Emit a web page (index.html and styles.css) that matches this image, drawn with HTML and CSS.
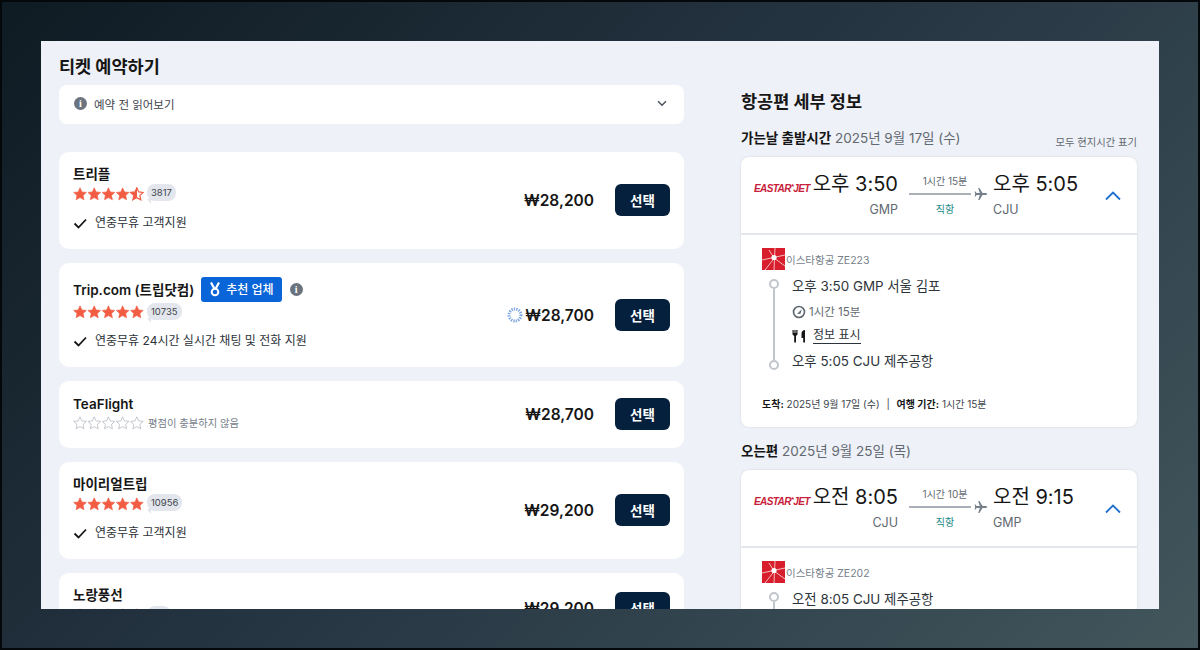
FILE: index.html
```html
<!DOCTYPE html>
<html lang="ko">
<head>
    <meta charset="UTF-8">
    <meta name="viewport" content="width=device-width, initial-scale=1.0">
    <title>티켓 예약하기</title>
    <link rel="stylesheet" href="styles.css">
</head>
<body>
<svg class="defs" width="0" height="0">
    <defs>
        <path id="star" d="M7 .8l1.900 4.100 4.500.5-3.300 3 .9 4.400L7 10.600l-3.900 2.200.9-4.400-3.300-3 4.500-.5z"/>
        <linearGradient id="half"><stop offset="50%" stop-color="#f25c43"/><stop offset="50%" stop-color="#fff"/></linearGradient>
        <path id="check" d="M1.500 6.500l4 4 7.500-8" fill="none" stroke="#161616" stroke-width="1.800"/>
        <g id="plane"><path d="M13 6c0-.7-.6-1-1.300-1H8.600L5.400 0H4.200l1.600 5H2.600L1.500 3.600H.6L1.200 6 .6 8.400h.9L2.600 7h3.200l-1.600 5h1.200l3.200-5h3.100C12.400 7 13 6.700 13 6z" fill="#75808a"/></g>
        <g id="mark">
            <rect width="23" height="22" fill="#d81e2c"/>
            <path d="M0 12L23 7M3 22L14 8M13 0l-1 22M7 2l5 8M12 10l11 8" stroke="#fff" stroke-width=".7" fill="none"/>
            <circle cx="12" cy="9.500" r="2.600" fill="#fff"/>
        </g>
    </defs>
</svg>
<div class="stage">
    <div class="panel">
        <div class="left">
            <h1>티켓 예약하기</h1>
            <div class="note">
                <span class="info">i</span>
                <span class="note-text">예약 전 읽어보기</span>
                <svg width="10" height="7" viewBox="0 0 10 7"><path d="M1 1.200l4 4 4-4" fill="none" stroke="#4a535c" stroke-width="1.500"/></svg>
            </div>

            <div class="offers">
                <div class="offer">
                    <div class="offer-info">
                        <div class="name">트리플</div>
                        <div class="rating">
                            <svg class="stars" width="71" height="14" viewBox="0 0 71 14" fill="#f25c43" stroke="#f25c43" stroke-width=".6">
                                <use href="#star"/><use href="#star" x="14.200"/><use href="#star" x="28.400"/><use href="#star" x="42.600"/><use href="#star" x="56.800" fill="url(#half)" stroke-width="1.200"/>
                            </svg>
                            <span class="count">3817</span>
                        </div>
                        <div class="perk"><svg width="14" height="12" viewBox="0 0 14 12"><use href="#check"/></svg>연중무휴 고객지원</div>
                    </div>
                    <div class="price">₩28,200</div>
                    <button class="btn">선택</button>
                </div>

                <div class="offer offer-tall">
                    <div class="offer-info">
                        <div class="name">Trip.com (트립닷컴)
                            <span class="badge">
                                <svg width="12" height="15" viewBox="0 0 12 15"><path d="M2 .5L5.500 7M10 .5L6.500 7" stroke="#fff" stroke-width="2.200" fill="none"/><circle cx="6" cy="10" r="3.300" fill="none" stroke="#fff" stroke-width="2"/></svg>추천 업체</span>
                            <span class="info">i</span>
                        </div>
                        <div class="rating">
                            <svg class="stars" width="71" height="14" viewBox="0 0 71 14" fill="#f25c43" stroke="#f25c43" stroke-width=".6">
                                <use href="#star"/><use href="#star" x="14.200"/><use href="#star" x="28.400"/><use href="#star" x="42.600"/><use href="#star" x="56.800"/>
                            </svg>
                            <span class="count">10735</span>
                        </div>
                        <div class="perk"><svg width="14" height="12" viewBox="0 0 14 12"><use href="#check"/></svg>연중무휴 24시간 실시간 채팅 및 전화 지원</div>
                    </div>
                    <svg class="spinner" width="16" height="16" viewBox="0 0 16 16">
                        <circle cx="8" cy="8" r="6" fill="none" stroke="#7ba6e0" stroke-width="3" stroke-dasharray="1.300 1.100"/>
                    </svg>
                    <div class="price">₩28,700</div>
                    <button class="btn">선택</button>
                </div>

                <div class="offer offer-short">
                    <div class="offer-info">
                        <div class="name">TeaFlight</div>
                        <div class="rating rating-none">
                            <svg class="stars" width="71" height="14" viewBox="0 0 71 14" fill="none" stroke="#c4c8ce" stroke-width="1">
                                <use href="#star"/><use href="#star" x="14.200"/><use href="#star" x="28.400"/><use href="#star" x="42.600"/><use href="#star" x="56.800"/>
                            </svg>
                            <span class="no-rating">평점이 충분하지 않음</span>
                        </div>
                    </div>
                    <div class="price">₩28,700</div>
                    <button class="btn">선택</button>
                </div>

                <div class="offer">
                    <div class="offer-info">
                        <div class="name">마이리얼트립</div>
                        <div class="rating">
                            <svg class="stars" width="71" height="14" viewBox="0 0 71 14" fill="#f25c43" stroke="#f25c43" stroke-width=".6">
                                <use href="#star"/><use href="#star" x="14.200"/><use href="#star" x="28.400"/><use href="#star" x="42.600"/><use href="#star" x="56.800"/>
                            </svg>
                            <span class="count">10956</span>
                        </div>
                        <div class="perk"><svg width="14" height="12" viewBox="0 0 14 12"><use href="#check"/></svg>연중무휴 고객지원</div>
                    </div>
                    <div class="price">₩29,200</div>
                    <button class="btn">선택</button>
                </div>

                <div class="offer offer-last">
                    <div class="offer-info">
                        <div class="name">노랑풍선</div>
                        <div class="rating">
                            <svg class="stars" width="71" height="14" viewBox="0 0 71 14" fill="#f25c43" stroke="#f25c43" stroke-width=".6">
                                <use href="#star"/><use href="#star" x="14.200"/><use href="#star" x="28.400"/><use href="#star" x="42.600"/><use href="#star" x="56.800"/>
                            </svg>
                            <span class="count"></span>
                        </div>
                    </div>
                    <div class="price">₩29,200</div>
                    <button class="btn">선택</button>
                </div>
            </div>
        </div>

        <div class="right">
            <h2>항공편 세부 정보</h2>
            <div class="leg-title">
                <div><b>가는날 출발시간</b> 2025년 9월 17일 (수)</div>
                <div class="local">모두 현지시간 표기</div>
            </div>
            <div class="flight">
                <div class="flight-head">
                    <div class="airline-logo">EASTAR<i>*</i>JET</div>
                    <div class="end end-from">
                        <div class="time">오후 3:50</div>
                        <div class="code">GMP</div>
                    </div>
                    <div class="route">
                        <div class="dur">1시간 15분</div>
                        <div class="route-line"><span></span><svg width="13" height="12" viewBox="0 0 13 12"><use href="#plane"/></svg></div>
                        <div class="direct">직항</div>
                    </div>
                    <div class="end">
                        <div class="time">오후 5:05</div>
                        <div class="code">CJU</div>
                    </div>
                    <svg class="chevron" width="16" height="10" viewBox="0 0 16 10"><path d="M1 8.500l7-7 7 7" fill="none" stroke="#1e6fd0" stroke-width="1.800"/></svg>
                </div>
                <div class="flight-body">
                    <div class="carrier"><svg width="23" height="22" viewBox="0 0 23 22"><use href="#mark"/></svg>이스타항공 ZE223</div>
                    <div class="timeline">
                        <div class="rail"><span class="dot"></span><span class="rail-line"></span><span class="dot"></span></div>
                        <div class="stops">
                            <div class="stop">오후 3:50 GMP 서울 김포</div>
                            <div class="elapsed">
                                <svg width="14" height="14" viewBox="0 0 14 14"><circle cx="7" cy="7" r="5.500" fill="none" stroke="#5c6670" stroke-width="1.600"/><path d="M7 7l2.800-2.800L8.500 8.800 5 9z" fill="#5c6670"/></svg>1시간 15분
                            </div>
                            <div class="meal">
                                <svg width="14" height="14" viewBox="0 0 14 14" fill="#161616"><path d="M.5 1h1.200v3h.7V1h1.200v3h.7V1h1.200v4.500L4 7v6.500H2.200V7L.5 5.500zM13 1v12.500h-1.800V9H9.500V4.500C9.500 2.500 11 1 13 1z"/></svg>
                                <span class="meal-link">정보 표시</span>
                            </div>
                            <div class="stop">오후 5:05 CJU 제주공항</div>
                        </div>
                    </div>
                    <div class="arrive"><b>도착:</b> 2025년 9월 17일 (수) <span class="sep">|</span> <b>여행 기간:</b> 1시간 15분</div>
                </div>
            </div>

            <div class="leg-title leg-back">
                <div><b>오는편</b> 2025년 9월 25일 (목)</div>
            </div>
            <div class="flight">
                <div class="flight-head">
                    <div class="airline-logo">EASTAR<i>*</i>JET</div>
                    <div class="end end-from">
                        <div class="time">오전 8:05</div>
                        <div class="code">CJU</div>
                    </div>
                    <div class="route">
                        <div class="dur">1시간 10분</div>
                        <div class="route-line"><span></span><svg width="13" height="12" viewBox="0 0 13 12"><use href="#plane"/></svg></div>
                        <div class="direct">직항</div>
                    </div>
                    <div class="end">
                        <div class="time">오전 9:15</div>
                        <div class="code">GMP</div>
                    </div>
                    <svg class="chevron" width="16" height="10" viewBox="0 0 16 10"><path d="M1 8.500l7-7 7 7" fill="none" stroke="#1e6fd0" stroke-width="1.800"/></svg>
                </div>
                <div class="flight-body">
                    <div class="carrier"><svg width="23" height="22" viewBox="0 0 23 22"><use href="#mark"/></svg>이스타항공 ZE202</div>
                    <div class="timeline">
                        <div class="rail"><span class="dot"></span><span class="rail-line"></span><span class="dot"></span></div>
                        <div class="stops">
                            <div class="stop">오전 8:05 CJU 제주공항</div>
                        </div>
                    </div>
                </div>
            </div>
        </div>
    </div>
</div>
</body>
</html>
```

FILE: styles.css
```css
* {
    box-sizing: border-box;
}
html, body {
    margin: 0;
    height: 100%;
    overflow: hidden;
}
body {
    font-family: Inter, "Noto Sans CJK KR", sans-serif;
    color: #161616;
    background-color: #000;
}
.defs {
    position: absolute;
}
.stage {
    width: 1200px;
    height: 650px;
    border: 2px solid #05080a;
    padding: 39px;
    background: linear-gradient(135deg, #0f1b23 0%, #263643 50%, #42565c 100%);
}
.panel {
    height: 568px;
    background-color: #eef1f7;
    display: flex;
    overflow: hidden;
}
.left {
    width: 643px;
    padding-left: 18px;
    flex-shrink: 0;
}
.right {
    width: 396px;
    margin-left: 57px;
}
h1 {
    font-size: 17.500px;
    line-height: 24px;
    font-weight: 700;
    margin: 14px 0 6px;
}
h2 {
    font-size: 17.500px;
    line-height: 24px;
    font-weight: 700;
    margin: 49px 0 15px;
}
.note {
    height: 39px;
    background-color: #fff;
    border-radius: 8px;
    display: flex;
    align-items: center;
    padding: 0 17px 2px 15px;
    font-size: 11.500px;
    color: #3d444b;
}
.note-text {
    flex: 1;
    margin-left: 7px;
}
.info {
    display: inline-flex;
    align-items: center;
    justify-content: center;
    width: 13px;
    height: 13px;
    border-radius: 50%;
    background-color: #6a737e;
    color: #fff;
    font-size: 10px;
    font-weight: 800;
    font-family: "Liberation Serif", serif;
}
.offers {
    margin-top: 28px;
    display: flex;
    flex-direction: column;
    gap: 14px;
}
.offer {
    height: 97px;
    flex-shrink: 0;
    background-color: #fff;
    border-radius: 10px;
    display: flex;
    align-items: center;
    padding: 0 14px 0 14px;
}
.offer-tall {
    height: 104px;
}
.offer-short {
    height: 67px;
}
.offer-last {
    height: 70px;
}
.offer-info {
    flex: 1;
    padding-bottom: 5px;
}
.offer-tall .offer-info {
    padding-bottom: 2px;
}
.offer-short .offer-info {
    padding-bottom: 4px;
}
.offer-last .offer-info {
    padding-bottom: 6px;
}
.name {
    font-size: 13.500px;
    line-height: 20px;
    font-weight: 600;
    display: flex;
    align-items: center;
}
.badge {
    display: inline-flex;
    align-items: center;
    gap: 5px;
    height: 25px;
    padding: 0 8px;
    margin-left: 7px;
    border-radius: 3px;
    background-color: #0a66d8;
    color: #fff;
    font-size: 12px;
    font-weight: 500;
}
.name .info {
    margin-left: 8px;
}
.rating {
    display: flex;
    align-items: center;
    height: 20px;
}
.rating-none {
    height: 18px;
}
.stars {
    display: block;
}
.count {
    position: relative;
    top: -1px;
    margin-left: 3px;
    padding: 0 4px;
    min-width: 24px;
    height: 17px;
    line-height: 17px;
    border-radius: 8px;
    background-color: #e3e6ec;
    font-size: 9.500px;
    color: #3d444b;
}
.count::after {
    content: "";
    position: absolute;
    left: 0;
    bottom: -3px;
    border-top: 5px solid #e3e6ec;
    border-left: 4px solid transparent;
}
.no-rating {
    font-size: 10.300px;
    color: #75808a;
    margin-left: 4px;
}
.perk {
    display: flex;
    align-items: center;
    gap: 8px;
    margin-top: 9px;
    font-size: 12px;
    line-height: 20px;
    color: #2d333a;
}
.price {
    font-size: 15.500px;
    font-weight: 600;
    margin-right: 21px;
    color: #161616;
}
.spinner {
    margin-right: 2px;
}
.btn {
    width: 55px;
    height: 32px;
    margin-bottom: 1px;
    border: none;
    border-radius: 6px;
    background-color: #05203c;
    color: #fff;
    font-family: inherit;
    font-size: 13.500px;
    font-weight: 700;
    padding: 0;
}
.leg-title {
    display: flex;
    justify-content: space-between;
    align-items: flex-end;
    font-size: 13.500px;
    line-height: 18px;
    color: #626971;
    margin-bottom: 10px;
}
.leg-title b {
    color: #161616;
    font-weight: 700;
}
.leg-back {
    margin-top: 15px;
}
.local {
    font-size: 10.300px;
    color: #626971;
    margin-bottom: -4px;
}
.flight {
    background-color: #fff;
    border-radius: 8px;
    box-shadow: 0 0 2px rgba(0,0,0,0.15);
}
.flight-head {
    height: 78px;
    border-bottom: 2px solid #e3e6ec;
    display: flex;
    padding: 15px 0 0 13px;
    position: relative;
}
.airline-logo {
    width: 56px;
    margin-top: 9px;
    font-family: "Liberation Sans", sans-serif;
    font-size: 10px;
    line-height: 12px;
    font-weight: 700;
    font-style: italic;
    color: #c8203a;
    letter-spacing: -0.6px;
    white-space: nowrap;
}
.airline-logo i {
    font-size: 8px;
    vertical-align: 3px;
}
.end-from {
    width: 88px;
    text-align: right;
}
.time {
    font-size: 20px;
    line-height: 24px;
    white-space: nowrap;
}
.code {
    font-size: 12.500px;
    line-height: 18px;
    color: #626971;
    margin-top: 5px;
}
.route {
    width: 84px;
    margin-left: 11px;
}
.dur {
    font-size: 10px;
    line-height: 14px;
    color: #626971;
    width: 72px;
    text-align: center;
    margin-top: 2px;
}
.route-line {
    display: flex;
    align-items: center;
    gap: 3px;
    height: 12px;
}
.route-line span {
    width: 62px;
    height: 1.500px;
    background-color: #aab0b8;
}
.direct {
    font-size: 10px;
    line-height: 16px;
    color: #1c8a8a;
    width: 72px;
    text-align: center;
    margin-top: 1px;
}
.chevron {
    position: absolute;
    right: 16px;
    top: 34px;
}
.flight-body {
    padding: 13px 20px 0 21px;
    min-height: 192px;
}
.carrier {
    display: flex;
    align-items: center;
    gap: 1px;
    font-size: 10.500px;
    color: #75808a;
}
.timeline {
    display: flex;
    margin-top: 7px;
    min-height: 86px;
}
.rail {
    width: 10px;
    margin: 2px 13px 0 7px;
    display: flex;
    flex-direction: column;
    align-items: center;
}
.dot {
    width: 10px;
    height: 10px;
    border-radius: 50%;
    border: 2px solid #c1c6cc;
    flex-shrink: 0;
}
.rail-line {
    width: 2px;
    flex: 1;
    background-color: #c1c6cc;
}
.stops {
    flex: 1;
}
.stop {
    font-size: 13.400px;
    line-height: 18px;
    color: #2d333a;
}
.elapsed {
    display: flex;
    align-items: center;
    gap: 3px;
    font-size: 11.500px;
    line-height: 16px;
    color: #626971;
    margin-top: 9px;
}
.meal {
    display: flex;
    align-items: center;
    gap: 7px;
    margin: 7px 0 8px;
    font-size: 12px;
    line-height: 16px;
    color: #2d333a;
}
.meal-link {
    border-bottom: 1px solid #2d333a;
}
.arrive {
    margin-top: 26px;
    font-size: 10px;
    line-height: 16px;
    color: #3d444b;
}
.arrive b {
    font-weight: 700;
    color: #161616;
}
.sep {
    margin: 0 4px;
}
```
